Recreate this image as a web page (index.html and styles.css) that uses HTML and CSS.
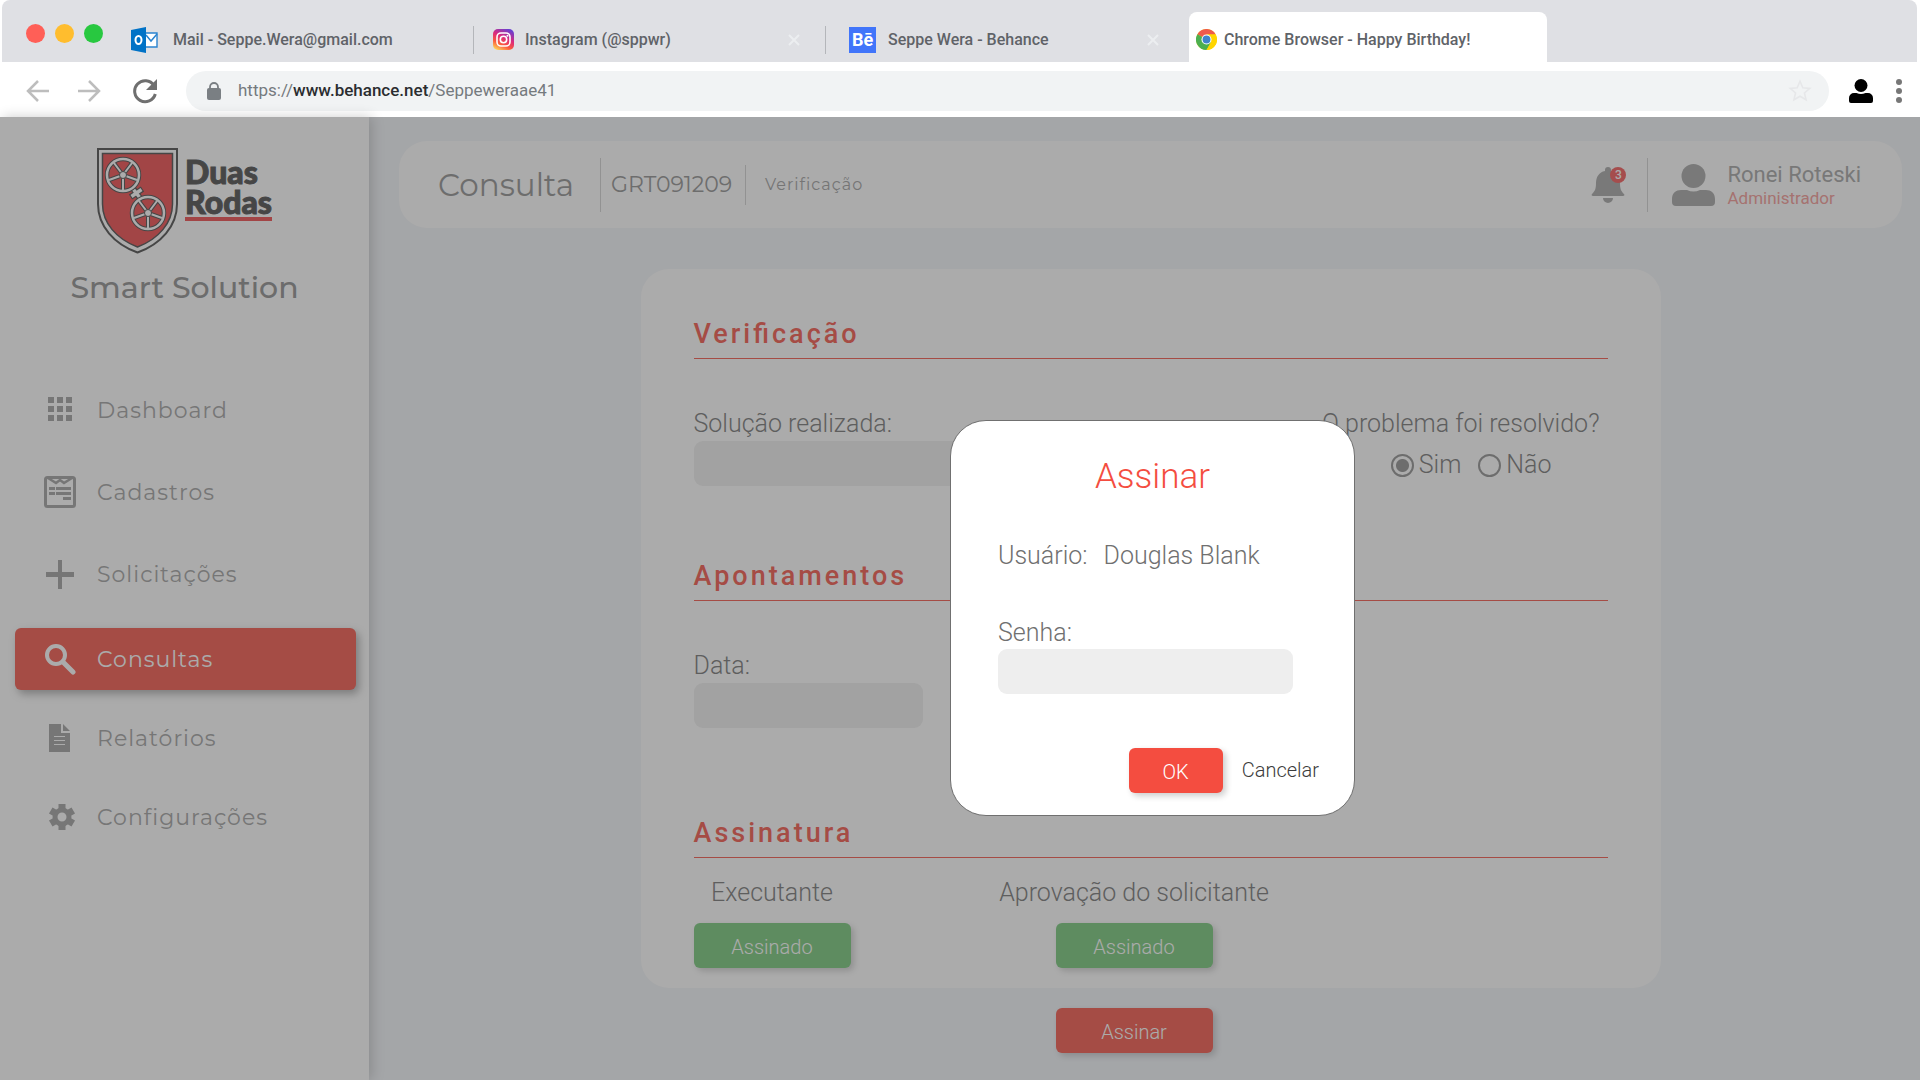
FILE: index.html
```html
<!DOCTYPE html>
<html lang="pt-BR">
<head>
<meta charset="utf-8">
<meta name="viewport" content="width=device-width, initial-scale=1">
<title>Smart Solution - Consulta</title>
<link rel="stylesheet" href="styles.css">
</head>
<body>
<header class="browser">
  <div class="tabbar">
    <div class="lights"><span class="light light-red"></span><span class="light light-yellow"></span><span class="light light-green"></span></div>
    <div class="tab tab-mail">
      <svg width="27" height="26" viewBox="0 0 27 26"><path d="M14 6h12v14H14z" fill="#fff" stroke="#2b84cf" stroke-width="1.4"/><path d="M15 8l5 6 6-7" fill="none" stroke="#2b84cf" stroke-width="1.5"/><path d="M0 3L15 0v26L0 23z" fill="#0072c6"/><ellipse cx="7.5" cy="13" rx="3" ry="4" fill="none" stroke="#fff" stroke-width="2"/></svg>
      <span>Mail - Seppe.Wera@gmail.com</span>
    </div>
    <div class="tab tab-insta">
      <svg width="21" height="21" viewBox="0 0 21 21"><defs><linearGradient id="ig" x1="0.2" y1="1" x2="0.7" y2="0"><stop offset="0" stop-color="#fed35a"/><stop offset=".3" stop-color="#fb5a3c"/><stop offset=".6" stop-color="#dd2a7b"/><stop offset="1" stop-color="#6a3fd0"/></linearGradient></defs><rect width="21" height="21" rx="5" fill="url(#ig)"/><rect x="4" y="4" width="13" height="13" rx="4" fill="none" stroke="#fff" stroke-width="1.6"/><circle cx="10.500" cy="10.500" r="3.200" fill="none" stroke="#fff" stroke-width="1.600"/><circle cx="14.500" cy="6.700" r="1" fill="#fff"/></svg>
      <span>Instagram (@sppwr)</span>
      <svg class="close" width="12" height="12" viewBox="0 0 12 12"><path d="M1 1l10 10M11 1L1 11"/></svg>
    </div>
    <div class="tab tab-behance">
      <span class="be">Bē</span>
      <span>Seppe Wera - Behance</span>
      <svg class="close" width="12" height="12" viewBox="0 0 12 12"><path d="M1 1l10 10M11 1L1 11"/></svg>
    </div>
    <div class="tab tab-active">
      <svg width="21" height="21" viewBox="0 0 48 48"><circle cx="24" cy="24" r="24" fill="#ffd500"/><path d="M24 24L3.200 12A24 24 0 0 1 44.800 12z" fill="#ee5a4c"/><path d="M3.200 12A24 24 0 0 0 24 48l10-18-10-6z" fill="#4caf50"/><path d="M24 12h20.800A24 24 0 0 1 24 48l10.400-18z" fill="#ffd500"/><circle cx="24" cy="24" r="11.500" fill="#fff"/><circle cx="24" cy="24" r="9" fill="#3f83cc"/></svg>
      <span>Chrome Browser - Happy Birthday!</span>
    </div>
  </div>
  <div class="toolbar">
    <button class="tool tool-back" aria-label="Voltar"><svg width="24" height="24" viewBox="0 0 24 24"><path d="M23 12H2M12 2L2 12l10 10" fill="none" stroke="#bdbdbd" stroke-width="2.500"/></svg></button>
    <button class="tool tool-forward" aria-label="Avançar"><svg width="24" height="24" viewBox="0 0 24 24"><path d="M1 12h21M12 2l10 10-10 10" fill="none" stroke="#bdbdbd" stroke-width="2.500"/></svg></button>
    <button class="tool tool-reload" aria-label="Recarregar"><svg width="26" height="26" viewBox="0 0 26 26"><path d="M22 7.500A10.500 10.500 0 1 0 23.300 16" fill="none" stroke="#6f6f6f" stroke-width="3"/><path d="M25 1v11H14z" fill="#6f6f6f"/></svg></button>
    <div class="address">
      <svg width="14" height="18" viewBox="0 0 14 18"><rect y="6" width="14" height="12" rx="2" fill="#7a7f83"/><path d="M3 7V5a4 4 0 0 1 8 0v2" fill="none" stroke="#7a7f83" stroke-width="1.800"/></svg>
      <span class="url">https://<b>www.behance.net</b>/Seppeweraae41</span>
      <svg class="star" width="26" height="26" viewBox="0 0 24 24"><path d="M12 3l2.600 6 6.400.600-4.900 4.200 1.500 6.300L12 16.800l-5.600 3.300 1.500-6.300L3 9.600l6.400-.6z" fill="none" stroke="#e6e7e9" stroke-width="1.500"/></svg>
    </div>
    <button class="tool tool-user" aria-label="Perfil"><svg width="24" height="24" viewBox="0 0 24 24"><circle cx="12" cy="6.500" r="6.500"/><path d="M0 22v-3a5 5 0 0 1 5-5h2.500q4.500 2 9 0H19a5 5 0 0 1 5 5v3q0 2-2 2H2q-2 0-2-2z"/></svg></button>
    <button class="tool tool-menu" aria-label="Menu"><svg width="6" height="24" viewBox="0 0 6 24" fill="#777"><circle cx="3" cy="3" r="3"/><circle cx="3" cy="12" r="3"/><circle cx="3" cy="21" r="3"/></svg></button>
  </div>
</header>

<div class="app">
  <aside class="sidebar">
    <div class="logo">
      <svg width="82" height="106" viewBox="0 0 82 106">
        <path d="M1 1h79v55c0 22-16 40-39.500 48.500C17 96 1 78 1 56z" fill="#fff" stroke="#424242" stroke-width="2"/>
        <path d="M5.500 5.500h70V56c0 19-14 35-35 43-21-8-35-24-35-43z" fill="#ef4043" stroke="#424242" stroke-width="1.500"/>
        <path d="M33.500 49l12-8M36 40.500l8 11" stroke="#424242" stroke-width="6"/>
        <path d="M34.500 48.500l10-7M36.500 41.500l7 9" stroke="#fff" stroke-width="3.500"/>
        <g id="wheel" fill="none">
          <circle cx="26" cy="27" r="16" stroke="#424242" stroke-width="4.500"/>
          <path d="M26 27v15M26 27l14 5M26 27l-14 5M26 27l9-12M26 27l-9-12" stroke="#424242" stroke-width="4"/>
          <circle cx="26" cy="27" r="16" stroke="#fff" stroke-width="2.500"/>
          <path d="M26 27v15M26 27l14 5M26 27l-14 5M26 27l9-12M26 27l-9-12" stroke="#fff" stroke-width="2"/>
          <circle cx="26" cy="27" r="3.500" fill="#fff" stroke="#424242"/>
        </g>
        <use href="#wheel" x="25" y="38"/>
      </svg>
      <div class="wordmark"><span>Duas</span><span>Rodas</span></div>
    </div>
    <p class="product">Smart Solution</p>
    <nav class="nav">
      <ul class="nav-group nav-main">
        <li><a href="#dashboard" class="nav-link"><svg width="32" height="32" viewBox="0 0 32 32"><path d="M4 3h6v6H4zM13 3h6v6h-6zM22 3h6v6h-6zM4 12h6v6H4zM13 12h6v6h-6zM22 12h6v6h-6zM4 21h6v6H4zM13 21h6v6h-6zM22 21h6v6h-6z"/></svg>Dashboard</a></li>
        <li><a href="#cadastros" class="nav-link"><svg width="32" height="32" viewBox="0 0 32 32"><rect x="1.500" y="1.500" width="29" height="29" rx="2" fill="none" stroke="currentColor" stroke-width="3"/><path d="M4 2l8 5 4-3 4 3 8-5" fill="none" stroke="currentColor" stroke-width="2.500"/><path d="M5 11h6v3H5zM12 11h15v3H12zM5 16h6v3H5zM12 16h15v3H12zM19 21h8v3h-8z"/></svg>Cadastros</a></li>
        <li><a href="#solicitacoes" class="nav-link"><svg width="32" height="32" viewBox="0 0 32 32"><path d="M14 2h4v12h12v5H18v12h-4V19H2v-5h12z"/></svg>Solicitações</a></li>
      </ul>
      <ul class="nav-group nav-reports">
        <li><a href="#consultas" class="nav-link nav-link-active"><svg width="32" height="32" viewBox="0 0 32 32"><circle cx="12" cy="12" r="9" fill="none" stroke="currentColor" stroke-width="4"/><path d="M19 19l10 10" stroke="currentColor" stroke-width="5" stroke-linecap="round"/></svg>Consultas</a></li>
        <li><a href="#relatorios" class="nav-link"><svg width="32" height="32" viewBox="0 0 32 32"><path fill-rule="evenodd" d="M5 2h12v9h9v19H5zM19 2l7 7h-7zM10 14v1h11v-1zM10 18v1h11v-1zM10 22v1h11v-1z"/></svg>Relatórios</a></li>
        <li><a href="#configuracoes" class="nav-link"><svg width="32" height="32" viewBox="0 0 32 32"><g transform="translate(18 16)"><circle r="7" fill="none" stroke="currentColor" stroke-width="5"/><path id="tooth" d="M-3.500-8v-5h7v5zM-3.500 8v5h7V8z"/><use href="#tooth" transform="rotate(60)"/><use href="#tooth" transform="rotate(120)"/></g></svg>Configurações</a></li>
      </ul>
    </nav>
  </aside>

  <main class="main">
    <div class="topbar">
      <h1 class="crumb-title">Consulta</h1>
      <span class="crumb-code">GRT091209</span>
      <span class="crumb-step">Verificação</span>
      <button class="bell" aria-label="Notificações">
        <svg width="34" height="36" viewBox="0 0 34 36"><path d="M14 3a3 3 0 0 1 6 0v1c6 1 9 6 9 12 0 6 1 8 4 11 1 1 0 2-1 2H2c-1 0-2-1-1-2 3-3 4-5 4-11C5 10 8 5 14 4zM12 31h10a5 5 0 0 1-10 0z" fill="#a2a2a2"/></svg>
        <span class="badge">3</span>
      </button>
      <div class="user">
        <svg width="43" height="42" viewBox="0 0 43 42"><ellipse cx="21.500" cy="12" rx="12" ry="12" fill="#a2a2a2"/><path d="M0 38v-3c0-6 4-9 9-9h6q6.500 3 13 0h6c5 0 9 3 9 9v3q0 4-4 4H4q-4 0-4-4z" fill="#a2a2a2"/></svg>
        <div><p class="user-name">Ronei Roteski</p><p class="user-role">Administrador</p></div>
      </div>
    </div>

    <form class="form">
      <div class="card">
        <section class="section section-check">
          <h2 class="section-title">Verificação</h2>
          <div class="row">
            <div class="field field-wide"><label for="solucao">Solução realizada:</label><input id="solucao" class="input" type="text"></div>
            <fieldset class="question">
              <legend>O problema foi resolvido?</legend>
              <div class="options">
                <label class="option"><input type="radio" name="resolvido" checked>Sim</label>
                <label class="option"><input type="radio" name="resolvido">Não</label>
              </div>
            </fieldset>
          </div>
        </section>
        <section class="section section-notes">
          <h2 class="section-title">Apontamentos</h2>
          <div class="field field-date"><label for="data">Data:</label><input id="data" class="input" type="text"></div>
        </section>
        <section class="section">
          <h2 class="section-title">Assinatura</h2>
          <div class="signatures">
            <div class="signature"><span>Executante</span><button type="button" class="btn btn-green">Assinado</button></div>
            <div class="signature"><span>Aprovação do solicitante</span><button type="button" class="btn btn-green">Assinado</button></div>
          </div>
        </section>
      </div>
      <div class="actions"><button type="button" class="btn btn-red btn-sign">Assinar</button></div>
    </form>
  </main>

  <div class="overlay">
    <form class="modal" role="dialog" aria-labelledby="modal-title">
      <h2 id="modal-title" class="modal-title">Assinar</h2>
      <p class="modal-user"><span>Usuário:</span><span>Douglas Blank</span></p>
      <div class="modal-field"><label for="senha">Senha:</label><input id="senha" class="input" type="password"></div>
      <div class="modal-actions"><button type="button" class="btn btn-red btn-ok">OK</button><button type="button" class="btn-cancel">Cancelar</button></div>
    </form>
  </div>
</div>
</body>
</html>
```
FILE: styles.css
```css
* { box-sizing: border-box; }
body {
  margin: 0;
  min-height: 100vh;
  display: flex;
  flex-direction: column;
  background: #fff;
  font-family: Roboto, "Liberation Sans", sans-serif;
  color: #707070;
}
h1, h2, p, ul, fieldset { margin: 0; padding: 0; }
ul { list-style: none; }
button { border: 0; padding: 0; background: none; font: inherit; cursor: pointer; }
svg { display: block; flex: none; }

/* Browser window */
.browser { background: #fff; padding: 0 3px 0 2px; }
.tabbar {
  display: flex;
  height: 62px;
  background: #dfe0e4;
  border-radius: 8px 8px 0 0;
}
.lights { display: flex; align-items: center; gap: 10px; padding: 4px 0 0 24px; width: 129px; height: 62px; }
.light { width: 19px; height: 19px; border-radius: 50%; }
.light-red { background: #ff5f57; }
.light-yellow { background: #ffbd2e; }
.light-green { background: #28c840; }
.tab {
  display: flex;
  align-items: center;
  height: 50px;
  margin-top: 12px;
  padding-top: 5px;
  font-size: 16px;
  font-weight: 500;
  color: #5f6368;
  white-space: nowrap;
  position: relative;
}
.tab-mail { flex: 0 1 343px; gap: 15px; }
.tab-insta { flex: 0 1 352px; gap: 11px; padding-left: 19px; }
.tab-behance { flex: 0 1 363px; gap: 12px; padding-left: 23px; }
.tab-mail::after, .tab-insta::after {
  content: "";
  position: absolute;
  right: 0;
  top: 14px;
  width: 1px;
  height: 28px;
  background: #b4b6ba;
}
.tab-active {
  flex: 0 1 358px;
  gap: 7px;
  padding-left: 7px;
  background: #fff;
  border-radius: 8px 8px 0 0;
}
.close { margin-left: auto; margin-right: 26px; stroke: #eceef0; stroke-width: 2; fill: none; }
.tab-behance .close { margin-right: 30px; }
.be {
  width: 27px;
  height: 26px;
  background: #4175fa;
  color: #fff;
  font-weight: 700;
  font-size: 18px;
  line-height: 26px;
  text-align: center;
}
.toolbar { display: flex; align-items: center; height: 55px; padding: 3px 15px 0 24px; }
.tool-forward { margin-left: 27px; }
.tool-reload { margin-left: 31px; }
.address {
  flex: 1;
  display: flex;
  align-items: center;
  gap: 17px;
  height: 40px;
  margin: 0 20px 0 28px;
  padding: 0 16px 0 21px;
  border-radius: 20px;
  background: #f1f3f4;
}
.url { padding-bottom: 2px; font-size: 17px; color: #757a7e; line-height: 24px; }
.url b { font-weight: 500; color: #2b2d30; }
.star { margin-left: auto; }
.tool-menu { margin-left: 23px; }

/* Application */
.app { flex: 1; display: flex; position: relative; background: #f2f5f9; }
.sidebar {
  flex: 0 0 369px;
  padding-top: 31px;
  background: #fff;
  box-shadow: 3px 0 12px rgba(0, 0, 0, .2);
  font-family: Montserrat, Inter, sans-serif;
}
.logo { display: flex; gap: 6px; padding-left: 97px; }
.wordmark {
  align-self: flex-start;
  display: flex;
  flex-direction: column;
  margin-top: 9px;
  font-family: Lato, sans-serif;
  font-weight: 900;
  font-size: 32px;
  line-height: 30px;
  color: #424242;
  -webkit-text-stroke: 1px #424242;
}
.wordmark::after { content: ""; height: 4px; background: #ef4043; }
.product { margin-top: 14px; text-align: center; font-size: 30px; line-height: 40px; font-weight: 500; color: #898989; }
.nav { margin-top: 71px; padding: 0 13px 0 15px; }
.nav-group { display: flex; flex-direction: column; }
.nav-main { gap: 20px; }
.nav-reports { gap: 17px; margin-top: 23px; }
.nav-link {
  display: flex;
  align-items: center;
  gap: 21px;
  height: 62px;
  padding-left: 29px;
  border-radius: 6px;
  font-size: 22px;
  letter-spacing: 1px;
  color: #9c9c9c;
  text-decoration: none;
}
.nav-link svg { fill: currentColor; }
.nav-link-active { background: #f44d40; color: #fff; box-shadow: 3px 4px 8px rgba(0, 0, 0, .35); }

.main { flex: 1; min-width: 0; padding: 24px 18px 27px 30px; }
.topbar {
  display: flex;
  align-items: center;
  height: 87px;
  padding: 0 41px 0 39px;
  background: #fff;
  border-radius: 28px;
  font-family: Montserrat, Inter, sans-serif;
  white-space: nowrap;
}
.crumb-title { width: 163px; line-height: 54px; border-right: 1px solid #d0d0d0; font-size: 31px; font-weight: 400; color: #8c8c8c; }
.crumb-code { width: 145px; padding-left: 10px; line-height: 40px; border-right: 1px solid #d0d0d0; font-size: 22px; color: #8c8c8c; }
.crumb-step { padding-left: 19px; font-size: 16px; letter-spacing: 1px; color: #9a9a9a; }
.bell { position: relative; margin-left: auto; margin-right: 22px; }
.badge {
  position: absolute;
  right: -1px;
  top: 0;
  width: 16px;
  height: 16px;
  border-radius: 50%;
  background: #f4504f;
  color: #fff;
  font: 500 12px/16px Roboto, sans-serif;
  text-align: center;
}
.user { display: flex; align-items: center; gap: 12px; height: 54px; padding-left: 24px; border-left: 1px solid #d0d0d0; font-family: Roboto, sans-serif; }
.user-name { font-size: 22px; line-height: 26px; color: #a0a0a0; }
.user-role { font-size: 17px; line-height: 20px; color: #f49490; }

.form { max-width: 1020px; margin: 41px auto 0; }
.card { padding: 49px 53px 20px; background: #fff; border-radius: 28px; font-size: 25px; line-height: 32px; font-weight: 300; }
.section-title {
  padding-bottom: 8px;
  border-bottom: 1px solid #f44d40;
  font-size: 27px;
  line-height: 32px;
  font-weight: 500;
  letter-spacing: 3px;
  font-feature-settings: "liga" 1;
  color: #f44d40;
}
.section-check { margin-bottom: 74px; }
.section-notes { margin-bottom: 89px; }
.row { display: flex; justify-content: space-between; margin-top: 49px; padding-right: 8px; }
.field { display: flex; flex-direction: column; gap: 1px; }
.field-wide { flex: 0 1 480px; }
.field-date { width: 229px; margin-top: 49px; }
.input {
  width: 100%;
  height: 45px;
  padding: 0 12px;
  border: 0;
  border-radius: 9px;
  background: #eee;
  font: inherit;
  color: inherit;
}
.question { border: 0; min-width: 0; }
.question legend { padding: 0; }
.options { display: flex; justify-content: flex-end; gap: 17px; margin-top: 9px; padding-right: 48px; }
.option { display: flex; align-items: center; gap: 5px; }
.option input {
  appearance: none;
  width: 23px;
  height: 23px;
  margin: 0;
  border: 2px solid #8b8b8b;
  border-radius: 50%;
}
.option input:checked { background: radial-gradient(circle, #8b8b8b 6px, transparent 7px); }
.signatures { display: grid; grid-template-columns: 306px 269px; margin-top: 19px; }
.signature { display: flex; flex-direction: column; align-items: center; justify-self: center; gap: 14px; white-space: nowrap; }
.signature:first-child { justify-self: start; }
.btn {
  width: 157px;
  height: 45px;
  border-radius: 6px;
  color: #fff;
  font-size: 20px;
  line-height: 24px;
  font-weight: 300;
  padding-top: 3px;
  box-shadow: 3px 3px 6px rgba(0, 0, 0, .2);
}
.btn-green { background: #6fc573; }
.btn-red { background: #f44d40; }
.actions { display: grid; grid-template-columns: 306px 269px; padding: 0 53px; margin-top: 20px; }
.btn-sign { grid-column: 2; justify-self: center; }

/* Signature dialog */
.overlay {
  position: absolute;
  inset: 0;
  display: flex;
  align-items: center;
  justify-content: center;
  padding: 38px 0 0 385px;
  background: rgba(75, 75, 75, .466);
}
.modal {
  width: 405px;
  padding: 34px 35px 22px 47px;
  border: 1px solid #707070;
  border-radius: 36px;
  background: #fff;
  font-size: 25px;
  line-height: 32px;
  font-weight: 300;
}
.modal-title { margin-left: -12px; text-align: center; font-size: 35px; line-height: 44px; font-weight: 300; color: #f44d40; }
.modal-user { display: flex; gap: 16px; margin-top: 41px; }
.modal-field { display: flex; flex-direction: column; margin-top: 45px; padding-right: 26px; }
.modal-actions { display: flex; justify-content: flex-end; gap: 19px; margin-top: 54px; }
.btn-ok { width: 94px; }
.btn-cancel { color: #3c3c3c; font-size: 20px; line-height: 24px; font-weight: 300; }
```
